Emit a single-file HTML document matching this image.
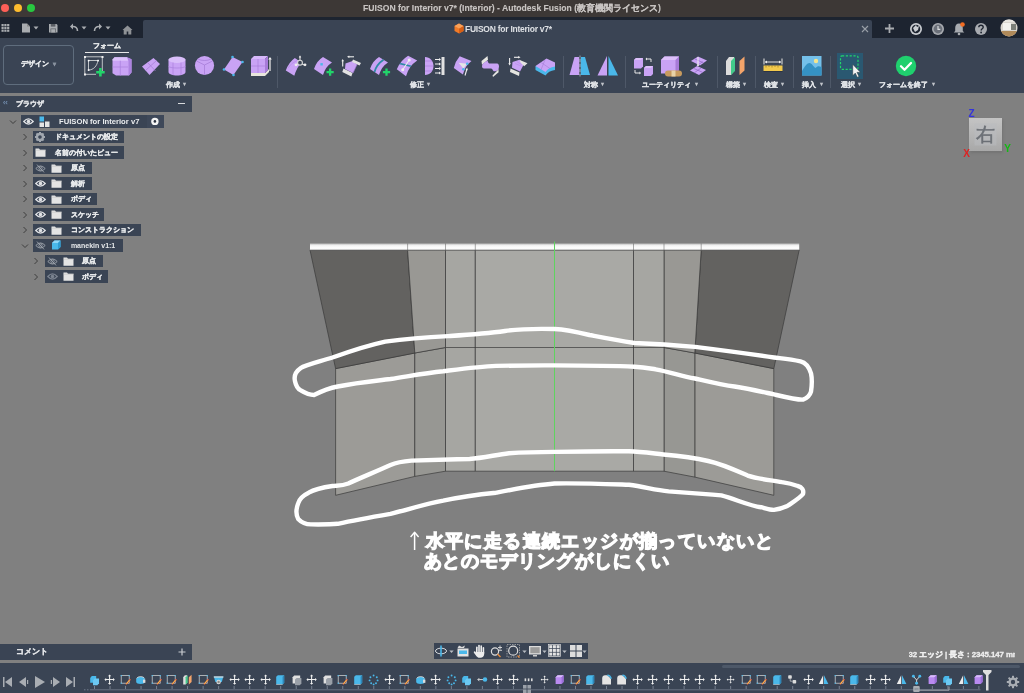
<!DOCTYPE html>
<html lang="ja"><head><meta charset="utf-8"><title>Fusion</title>
<style>
*{margin:0;padding:0;box-sizing:border-box}
html,body{width:1024px;height:693px;overflow:hidden;background:#808080;font-family:"Liberation Sans",sans-serif;position:relative}
.a{position:absolute}
div.a{-webkit-text-stroke-width:0.3px}
svg{overflow:visible}
</style></head><body>
<div id="root" style="position:absolute;left:0;top:0;width:1024px;height:693px;will-change:transform">
<div class="a" style="left:0;top:0;width:1024px;height:17px;background:#3d3836"></div>
<div class="a" style="left:0.7000000000000002px;top:4.2px;width:8px;height:8px;border-radius:50%;background:#fe5f57"></div>
<div class="a" style="left:13.600000000000001px;top:4.2px;width:8px;height:8px;border-radius:50%;background:#febc2e"></div>
<div class="a" style="left:26.5px;top:4.2px;width:8px;height:8px;border-radius:50%;background:#28c840"></div>
<div class="a" style="left:0;top:2px;width:1024px;text-align:center;font-size:8.62px;font-weight:bold;color:#c9c5c3;line-height:12px;-webkit-text-stroke-width:0.1px">FUISON for Interior v7* (Interior) - Autodesk Fusion (教育機関ライセンス)</div>
<div class="a" style="left:0;top:17px;width:1024px;height:21px;background:#1d2430"></div>
<div class="a" style="left:143px;top:20px;width:729px;height:18px;background:#3a4454;border-radius:2px 2px 0 0"></div>
<svg class="a" style="left:0px;top:23px" width="10" height="10" viewBox="0 0 10 10"><rect x="1.5" y="1.0" width="2.2" height="2.2" fill="#a9acb0"/><rect x="1.5" y="3.8" width="2.2" height="2.2" fill="#a9acb0"/><rect x="1.5" y="6.6" width="2.2" height="2.2" fill="#a9acb0"/><rect x="4.3" y="1.0" width="2.2" height="2.2" fill="#a9acb0"/><rect x="4.3" y="3.8" width="2.2" height="2.2" fill="#a9acb0"/><rect x="4.3" y="6.6" width="2.2" height="2.2" fill="#a9acb0"/><rect x="7.1" y="1.0" width="2.2" height="2.2" fill="#a9acb0"/><rect x="7.1" y="3.8" width="2.2" height="2.2" fill="#a9acb0"/><rect x="7.1" y="6.6" width="2.2" height="2.2" fill="#a9acb0"/></svg>
<svg class="a" style="left:21px;top:23px" width="10" height="10" viewBox="0 0 10 10"><path d="M1 0.5h5l3 3v6h-8z" fill="#a9acb0"/><path d="M6 0.5v3h3" fill="#888"/></svg>
<svg class="a" style="left:33px;top:26px" width="7" height="4" viewBox="0 0 7 4"><path d="M0.5 0.5h5l-2.5 3z" fill="#a9acb0"/></svg>
<svg class="a" style="left:48px;top:23px" width="10" height="10" viewBox="0 0 10 10"><path d="M1 1h7.5l1 1v7.5h-8.5z" fill="#a9acb0"/><rect x="2.8" y="1" width="4.6" height="2.6" fill="#5a5e64"/><rect x="2.5" y="5.5" width="5.5" height="4" fill="#5a5e64"/><rect x="3.2" y="6.2" width="4.1" height="3.3" fill="#a9acb0"/></svg>
<svg class="a" style="left:69px;top:23px" width="10" height="9" viewBox="0 0 10 9"><path d="M8.5 8c0-3-2-4.5-4.5-4.5h-2" stroke="#a9acb0" stroke-width="1.6" fill="none"/><path d="M1 3.5l3-3v6z" fill="#a9acb0"/></svg>
<svg class="a" style="left:81px;top:26px" width="7" height="4" viewBox="0 0 7 4"><path d="M0.5 0.5h5l-2.5 3z" fill="#a9acb0"/></svg>
<svg class="a" style="left:93px;top:23px" width="10" height="9" viewBox="0 0 10 9"><path d="M1.5 8c0-3 2-4.5 4.5-4.5h2" stroke="#a9acb0" stroke-width="1.6" fill="none"/><path d="M9 3.5l-3-3v6z" fill="#a9acb0"/></svg>
<svg class="a" style="left:105px;top:26px" width="7" height="4" viewBox="0 0 7 4"><path d="M0.5 0.5h5l-2.5 3z" fill="#a9acb0"/></svg>
<svg class="a" style="left:122px;top:25px" width="11" height="10" viewBox="0 0 11 10"><path d="M5.5 0.5l5 4.5h-1.2v4.5h-3v-3h-1.6v3h-3v-4.5h-1.2z" fill="#8f9296"/></svg>
<svg class="a" style="left:454px;top:23px" width="10" height="11" viewBox="0 0 10 11"><path d="M5 0.5l4.5 2.5v5l-4.5 2.5l-4.5-2.5v-5z" fill="#f07b28"/><path d="M5 5.5l4.5-2.5v5l-4.5 2.5z" fill="#d85f14"/><path d="M0.5 3l4.5-2.5l4.5 2.5l-4.5 2.5z" fill="#f9a25a"/></svg>
<div class="a" style="left:465px;top:23.5px;font-size:8.5px;font-weight:bold;letter-spacing:-0.25px;color:#dde0e4;line-height:10px;white-space:nowrap;-webkit-text-stroke-width:0">FUISON for Interior v7*</div>
<svg class="a" style="left:861px;top:25px" width="8" height="8" viewBox="0 0 8 8"><path d="M1 1l6 6M7 1l-6 6" stroke="#9aa0a8" stroke-width="1.1"/></svg>
<svg class="a" style="left:884px;top:23px" width="11" height="11" viewBox="0 0 11 11"><path d="M5.5 1v9M1 5.5h9" stroke="#a9acb0" stroke-width="1.8"/></svg>
<svg class="a" style="left:909px;top:22px" width="14" height="14" viewBox="0 0 14 14"><circle cx="7" cy="7" r="6" fill="#c9ccd0"/><circle cx="7" cy="7" r="4.3" fill="#1d2430"/><path d="M4 6l3-3l1 2l2-1l-1 4l-3 2z" fill="#c9ccd0"/></svg>
<svg class="a" style="left:931px;top:22px" width="14" height="14" viewBox="0 0 14 14"><circle cx="7" cy="7" r="6" fill="#a8abb0"/><circle cx="7" cy="7" r="4.4" fill="#6b7079"/><path d="M7 4v3.3h2.3" stroke="#d8dadd" stroke-width="1.2" fill="none"/></svg>
<svg class="a" style="left:952px;top:21px" width="14" height="15" viewBox="0 0 14 15"><path d="M7 2.5c-2.5 0-3.8 2-3.8 4.5v3l-1.5 1.5h10.6l-1.5-1.5v-3c0-2.5-1.3-4.5-3.8-4.5z" fill="#a8abb0"/><circle cx="7" cy="13" r="1.3" fill="#a8abb0"/><circle cx="10.5" cy="3.5" r="2.3" fill="#f26b21"/></svg>
<svg class="a" style="left:974px;top:22px" width="14" height="14" viewBox="0 0 14 14"><circle cx="7" cy="7" r="6" fill="#a8abb0"/><path d="M4.8 5.3c0-1.3 1-2.1 2.2-2.1s2.2 0.8 2.2 2c0 1.5-2 1.6-2 3.2" stroke="#1d2430" stroke-width="1.4" fill="none"/><circle cx="7.1" cy="10.5" r="0.9" fill="#1d2430"/></svg>
<svg class="a" style="left:1000px;top:19px" width="18" height="18" viewBox="0 0 18 18"><defs><clipPath id="av"><circle cx="9" cy="9" r="8.5"/></clipPath></defs><g clip-path="url(#av)"><rect width="18" height="18" fill="#d9d6cf"/><rect x="0" y="12" width="18" height="6" fill="#b08a5a"/><rect x="3" y="4" width="8" height="7" fill="#f2f2ee"/><rect x="11" y="5" width="5" height="6" fill="#7b7f78"/><rect x="0" y="0" width="18" height="3" fill="#e8e6e0"/></g></svg>
<div class="a" style="left:0;top:38px;width:1024px;height:55px;background:#3a4454"></div>
<div class="a" style="left:3px;top:45px;width:71px;height:40px;border:1.2px solid #5f6d7d;border-radius:4px"></div>
<div class="a" style="left:3px;top:59px;width:71px;text-align:center;font-size:7px;font-weight:bold;color:#e6e8ea;line-height:10px">デザイン<span style="font-size:6px;color:#8a93a0;margin-left:4px">&#9662;</span></div>
<div class="a" style="left:77px;top:40.5px;width:60px;text-align:center;font-size:7px;font-weight:bold;color:#e6e8ea;line-height:9px">フォーム</div>
<div class="a" style="left:85px;top:51.5px;width:44px;height:1.6px;background:#e8e8e8"></div>
<svg class="a" style="left:83px;top:55px" width="22" height="22" viewBox="0 0 22 22">
<rect x="1.8" y="1.8" width="17.5" height="17.5" fill="none" stroke="#bfc2c6" stroke-width="1"/>
<rect x="1" y="1" width="2" height="2" fill="#eee"/><rect x="18.5" y="1" width="2" height="2" fill="#eee"/><rect x="1" y="18.5" width="2" height="2" fill="#eee"/>
<path d="M5.5 5.5v9.5M5.5 15c5 0 8.5-4 9.5-9.5M5.5 5.5h9.5" stroke="#cfd2d6" stroke-width="0.9" fill="none"/>
<rect x="4.8" y="4.8" width="1.6" height="1.6" fill="#fff"/><rect x="14.3" y="4.8" width="1.6" height="1.6" fill="#fff"/><rect x="4.8" y="14.3" width="1.6" height="1.6" fill="#fff"/>
<rect x="13" y="16" width="7" height="6" fill="#3a4454"/>
<path d="M17.4 13v8.5M13.2 17.2h8.5" stroke="#22d46a" stroke-width="2.6"/>
</svg>
<svg class="a" style="left:111px;top:55px" width="22" height="22" viewBox="0 0 22 22">
<path d="M3.5 2.2h12.5l4.5 2v13.3l-2.5 3h-13l-3.5-2.2v-12.5z" fill="#c9a3f5"/>
<path d="M16 2.2l4.5 2v13.3l-3 3.2v-15z" fill="#ad83e0"/>
<path d="M1.5 4.3l2-2.1h12.5l1 3.5h-15.5z" fill="#dcc2fb"/>
<path d="M1.5 12h15.5M9.3 5.7v15" stroke="#a97fdc" stroke-width="0.7"/>
</svg>
<svg class="a" style="left:140px;top:55px" width="22" height="22" viewBox="0 0 22 22">
<path d="M2 11.5l11.5-8.5l6.5 6l-10.5 11z" fill="#c9a3f5"/>
<path d="M7.5 7.5l8 8.5M5.5 15.5l11-10" stroke="#a47ad6" stroke-width="0.7"/>
</svg>
<svg class="a" style="left:167px;top:55px" width="22" height="22" viewBox="0 0 22 22">
<path d="M1.5 4.5v12.5c0 2.2 4 3.5 8.5 3.5s8.5-1.3 8.5-3.5v-12.5z" fill="#c9a3f5"/>
<ellipse cx="10" cy="4.8" rx="8.5" ry="3.2" fill="#d9befa"/>
<path d="M1.5 11.5c2.5 2 14.5 2 17 0M6 7.5v12.5M14 7.5v12.5" stroke="#a97fdc" stroke-width="0.7" fill="none"/>
</svg>
<svg class="a" style="left:194px;top:55px" width="22" height="22" viewBox="0 0 22 22">
<circle cx="10.5" cy="10.5" r="9.6" fill="#c9a3f5"/>
<path d="M10.5 10v10M10.5 10l-8-4M10.5 10l8-4M4 4c3 2 10 2 13 0" stroke="#a47ad6" stroke-width="0.7" fill="none"/>
</svg>
<svg class="a" style="left:222px;top:55px" width="22" height="22" viewBox="0 0 22 22">
<path d="M10.5 2l10 5l-9 13l-9.5-5.5z" fill="#c9a3f5"/>
<circle cx="10.5" cy="2" r="1.3" fill="#4ab8ea"/><circle cx="20.5" cy="7" r="1.3" fill="#4ab8ea"/><circle cx="11.5" cy="20" r="1.3" fill="#4ab8ea"/><circle cx="2" cy="14.5" r="1.3" fill="#4ab8ea"/>
</svg>
<svg class="a" style="left:249px;top:55px" width="22" height="22" viewBox="0 0 22 22">
<path d="M2 18l14 0l4-4v3l-4 4h-14z" fill="#e8e6dc"/>
<path d="M2 4h14v14h-14z" fill="#c9a3f5"/>
<path d="M2 4l3-3h14l-3 3z" fill="#d6b8fa"/>
<path d="M16 4l3-3v14l-3 3z" fill="#a77bd8"/>
<path d="M2 11h14M9 4v14" stroke="#a47ad6" stroke-width="0.6"/>
<path d="M21 3v13" stroke="#d8d8d8" stroke-width="1.4"/><path d="M19.2 4.5l1.8-2.5l1.8 2.5z" fill="#eee"/>
</svg>
<div class="a" style="left:277px;top:56px;width:1px;height:32px;background:#4e5868"></div>
<svg class="a" style="left:284px;top:55px" width="22" height="22" viewBox="0 0 22 22"><path d="M1.8 15.6Q4.5 7.5 10.8 3L17.5 7.5Q13 12 10.3 20.8Z" fill="#c9a3f5"/>
<path d="M4 13Q7 8 13 5.5" stroke="#b088e0" stroke-width="0.6" fill="none"/>
<circle cx="16" cy="7.7" r="2.4" fill="#3a4454" stroke="#d8d8d8" stroke-width="1.1"/>
<path d="M16 5.3V1.5M14 8.8l-2 1.2M18 8.8l2 1.2" stroke="#ddd" stroke-width="1.1"/>
<path d="M14.8 2.5l1.2-2.2l1.2 2.2z" fill="#eee"/><circle cx="12" cy="9.8" r="1.4" fill="#eee"/><circle cx="21" cy="9.8" r="1.4" fill="#eee"/>
</svg>
<svg class="a" style="left:312px;top:55px" width="22" height="22" viewBox="0 0 22 22"><path d="M2 14Q4.5 6 11 2L20 7.5Q13.5 11.5 11 20Z" fill="#c9a3f5"/>
<rect x="8.4" y="8.1" width="2.4" height="2.4" fill="#4ab8ea"/>
<path d="M18.1 13.5v7.2M14.5 17.1h7.2" stroke="#22d46a" stroke-width="2.3"/>
</svg>
<svg class="a" style="left:340px;top:55px" width="22" height="22" viewBox="0 0 22 22">
<path d="M3.5 13.5l9 4.5l-1.2 3.5l-9-4.5z" fill="#e2e2e2"/>
<path d="M5.5 8.5l7-2.5l4.5 3.5l-4 8.5l-8-4z" fill="#c9a3f5"/>
<path d="M12.5 6l4.5 3.5l-4 8.5" stroke="#a47ad6" stroke-width="0.6" fill="none"/>
<path d="M13 4.5l8 3.5l-1.5 2.5l-7.5-3.5z" fill="#e2e2e2"/>
<path d="M2.7 11.5V5.5" stroke="#eee" stroke-width="1.1"/><path d="M1.4 6.3l1.3-2.3l1.3 2.3z" fill="#eee"/>
<path d="M14 1.8H8.5" stroke="#eee" stroke-width="1.1"/><path d="M9.3 0.5l-2.3 1.3l2.3 1.3z" fill="#eee"/>
</svg>
<svg class="a" style="left:368px;top:55px" width="22" height="22" viewBox="0 0 22 22"><path d="M2 14Q4.5 6 11 2L20 7.5Q13.5 11.5 11 20Z" fill="#c9a3f5"/>
<path d="M6.5 17Q8.5 9.5 15.5 4.8" stroke="#2f8aa6" stroke-width="1.8" fill="none"/>
<path d="M18.5 13.5v7.2M14.9 17.1h7.2" stroke="#22d46a" stroke-width="2.3"/>
</svg>
<svg class="a" style="left:396px;top:55px" width="22" height="22" viewBox="0 0 22 22">
<defs><clipPath id="c12"><path d="M0.8 14.2Q4.5 5.5 12.1 0.8L21.2 5.6Q13 11 10 21.2Z"/></clipPath></defs>
<path d="M0.8 14.2Q4.5 5.5 12.1 0.8L21.2 5.6Q13 11 10 21.2Z" fill="#c9a3f5"/>
<path d="M0 7.5L20 12.5" stroke="#2f8aa6" stroke-width="1.8" clip-path="url(#c12)"/>
<path d="M13.2 5L6.7 14.7" stroke="#eee" stroke-width="1.1"/>
<circle cx="13.2" cy="5" r="1.5" fill="#eee"/><circle cx="6.7" cy="14.7" r="1.5" fill="#eee"/>
</svg>
<svg class="a" style="left:423px;top:55px" width="22" height="22" viewBox="0 0 22 22">
<path d="M2 2c5 0 8.5 4 8.5 9s-3.5 9-8.5 9z" fill="#c9a3f5"/>
<path d="M2 6h7M2 11h8M2 16h7" stroke="#a47ad6" stroke-width="0.6"/>
<path d="M12 4.5h5M12 9h5M12 13.5h5M12 18h5" stroke="#eee" stroke-width="1"/>
<path d="M16 3l2 1.5l-2 1.5zM16 7.5l2 1.5l-2 1.5zM16 12l2 1.5l-2 1.5zM16 16.5l2 1.5l-2 1.5z" fill="#eee"/>
<rect x="18.5" y="2" width="3" height="18" fill="#e2e2e2"/>
</svg>
<svg class="a" style="left:452px;top:55px" width="22" height="22" viewBox="0 0 22 22">
<path d="M1.8 13.1Q3.5 6 7.7 1.3L19.5 6.1Q13 11 10.9 19.6Z" fill="#c9a3f5"/>
<path d="M6.6 7.7L15.2 8.8L11.4 13.6z" fill="#e4e4e4"/>
<circle cx="15.2" cy="8.8" r="1.3" fill="#4ab8ea"/><circle cx="11.4" cy="14.2" r="1.3" fill="#4ab8ea"/>
<path d="M13 20.5l1.8-6" stroke="#eee" stroke-width="1.1"/><path d="M13.6 14.8l1.6-2.2l0.6 2.6z" fill="#eee"/>
</svg>
<svg class="a" style="left:480px;top:55px" width="22" height="22" viewBox="0 0 22 22">
<path d="M1.5 6L7.5 1L8 4.8L2 9.8Z" fill="#e6e6e2"/>
<path d="M2 11C2 9 4 7.5 7.5 5.5L8 7C8.5 8 9 8.5 10 8.5L17 8.5C18.5 8.5 19 10 19 11.5L18.5 14.5C16 16.5 14 17 13 15.5C12.5 14 11.5 13.5 10.5 13.5L4 13.5C2.5 13.5 2 12.5 2 11Z" fill="#c9a3f5"/>
<path d="M12.5 20.5L18.5 14.3L18.6 17.3L13 22Z" fill="#e6e6e2"/>
</svg>
<svg class="a" style="left:507px;top:55px" width="22" height="22" viewBox="0 0 22 22">
<path d="M3.5 13.5L12.5 17.5L12 21L3 17Z" fill="#e4e4e0"/>
<path d="M5.5 7L12.5 4.8L17 9L13 16.5L5 12.8Z" fill="#c9a3f5"/>
<path d="M8 8.5l6 2.5M9.5 6.5l5 3" stroke="#b088e0" stroke-width="0.5"/>
<path d="M12.8 5L20.5 8.3L17.2 11.2L13.5 7.5Z" fill="#e4e4e0"/>
<path d="M2.6 3V9" stroke="#eee" stroke-width="1.1"/><path d="M1.3 8.2l1.3 2.3l1.3-2.3z" fill="#eee"/>
<path d="M7 2.3H12" stroke="#eee" stroke-width="1.1"/><path d="M11.2 1l2.3 1.3l-2.3 1.3z" fill="#eee"/>
</svg>
<svg class="a" style="left:534px;top:55px" width="22" height="22" viewBox="0 0 22 22">
<path d="M1.5 11v4l10 5.5c2-3 5-5 9.5-5.5v-4z" fill="#4ab8ea"/>
<path d="M1.5 11l11-7.5l8.5 4v4c-4.5 0.5-7.5 2.5-9.5 5.5z" fill="#c9a3f5"/>
<path d="M7 7.5l9 6M11 4.8l-4 10" stroke="#a47ad6" stroke-width="0.6"/>
</svg>
<div class="a" style="left:563px;top:56px;width:1px;height:32px;background:#4e5868"></div>
<svg class="a" style="left:569px;top:55px" width="22" height="22" viewBox="0 0 22 22">
<path d="M5.5 2h5v18h-10z" fill="#c9a3f5"/>
<path d="M11.5 2h4.5l5 18h-9.5z" fill="#4ab8ea"/>
<path d="M11 0.5v21" stroke="#9aa0a8" stroke-width="1"/>
<path d="M11 2v2M11 7v2M11 12v2M11 17v2" stroke="#2c3340" stroke-width="0.8"/>
</svg>
<svg class="a" style="left:597px;top:55px" width="22" height="22" viewBox="0 0 22 22">
<path d="M10 1v19.5h-9.5z" fill="#c9a3f5"/>
<path d="M11.5 1l9.5 19.5h-9.5z" fill="#4ab8ea"/>
</svg>
<div class="a" style="left:625px;top:56px;width:1px;height:32px;background:#4e5868"></div>
<svg class="a" style="left:633px;top:55px" width="22" height="22" viewBox="0 0 22 22">
<path d="M1 5l2-2h7v8.5l-2 2h-7z" fill="#c9a3f5"/><path d="M1 5l2-2h7l-2 2z" fill="#dcc0fa"/>
<path d="M11 13l2-2h7v8l-2 2h-7z" fill="#c9a3f5"/><path d="M11 13l2-2h7l-2 2z" fill="#dcc0fa"/>
<path d="M13 4h5v3" stroke="#e8e8e8" stroke-width="1" fill="none"/><path d="M14 2.5l-1.5 1.5l1.5 1.5z" fill="#eee"/>
<path d="M2 15v3h5" stroke="#e8e8e8" stroke-width="1" fill="none"/><path d="M6.5 16.5l1.5 1.5l-1.5 1.5z" fill="#eee"/>
</svg>
<svg class="a" style="left:660px;top:55px" width="22" height="22" viewBox="0 0 22 22">
<path d="M1 5l3.5-3.5h14.5v13.5l-3.5 3.5h-14.5z" fill="#c9a3f5"/>
<path d="M1 5l3.5-3.5h14.5l-3.5 3.5z" fill="#dcc0fa"/>
<path d="M15.5 5l3.5-3.5v13.5l-3.5 3.5z" fill="#a77bd8"/>
<rect x="5" y="15.5" width="17" height="6" rx="3" fill="#c79a5e"/>
<rect x="11.5" y="15.5" width="4" height="6" fill="#e9d2a8"/>
</svg>
<svg class="a" style="left:688px;top:55px" width="22" height="22" viewBox="0 0 22 22">
<path d="M3 6l7-4.5l9 4l-7 5z" fill="#c9a3f5"/>
<path d="M2 15.5l7-4.5l9 4l-7 5z" fill="#c9a3f5"/>
<path d="M6.5 3.8l9 4M8 11.5l6.5-4.8M5.5 13.3l9 4M6 18l7-5" stroke="#8f67c4" stroke-width="0.7"/>
<path d="M10 2v9" stroke="#eee" stroke-width="1"/><path d="M8.7 9.5l1.3 2l1.3-2z" fill="#eee"/>
</svg>
<div class="a" style="left:716.5px;top:56px;width:1px;height:32px;background:#4e5868"></div>
<svg class="a" style="left:724px;top:55px" width="22" height="22" viewBox="0 0 22 22">
<path d="M2 6l3-4h5v14l-3 4h-5z" fill="#dcdcdc"/>
<path d="M7 6l4-4v14l-4 4z" fill="#43c98a"/>
<path d="M15.5 6l5-4.5v14l-5 4.5z" fill="#f4a46a"/>
</svg>
<div class="a" style="left:754.5px;top:56px;width:1px;height:32px;background:#4e5868"></div>
<svg class="a" style="left:762px;top:55px" width="22" height="22" viewBox="0 0 22 22">
<rect x="1.5" y="10.5" width="19" height="5.5" fill="#f2c94c"/>
<path d="M4 10.5v2M7 10.5v1.5M10 10.5v2M13 10.5v1.5M16 10.5v2" stroke="#8a6d1c" stroke-width="0.6"/>
<path d="M2 3.5v6M20 3.5v6" stroke="#ccc" stroke-width="1.2"/>
<path d="M3 7h16" stroke="#ddd" stroke-width="1"/><path d="M5 5.5l-2 1.5l2 1.5zM17 5.5l2 1.5l-2 1.5z" fill="#eee"/>
<rect x="1.5" y="16" width="19" height="0.8" fill="#2a3040"/>
</svg>
<div class="a" style="left:792.5px;top:56px;width:1px;height:32px;background:#4e5868"></div>
<svg class="a" style="left:801px;top:55px" width="22" height="22" viewBox="0 0 22 22">
<rect x="1" y="1" width="19.5" height="19.5" fill="#74c0ea"/>
<circle cx="15" cy="6" r="2.2" fill="#f6e58d"/>
<path d="M1 16c3-5 5-8 7.5-8s4 4 6 5c2-2 3-2.5 6-1v8.5h-19.5z" fill="#3592c4"/>
</svg>
<div class="a" style="left:830px;top:56px;width:1px;height:32px;background:#4e5868"></div>
<div class="a" style="left:837px;top:53px;width:26px;height:25.5px;background:#2a5871"></div>
<svg class="a" style="left:837px;top:53px" width="26" height="26" viewBox="0 0 26 26">
<rect x="3.5" y="2.8" width="17.5" height="13.5" rx="1.5" fill="none" stroke="#22d46a" stroke-width="1.2" stroke-dasharray="2.2 1.6"/>
<path d="M15.8 11.5v11l2.5-2.5l2 4.2l1.6-0.8l-2-4.1h3.4z" fill="#f4f4f4" stroke="#333" stroke-width="0.4"/>
</svg>
<svg class="a" style="left:895px;top:55px" width="22" height="22" viewBox="0 0 22 22">
<circle cx="11" cy="11" r="10.2" fill="#1fd06e"/>
<path d="M6 11.3l3.5 3.4l6.5-6.7" stroke="#fff" stroke-width="2.3" fill="none" stroke-linecap="round" stroke-linejoin="round"/>
</svg>
<div class="a lbl" style="left:115.89999999999999px;top:79.5px;width:120px;text-align:center;font-size:7px;color:#dfe2e6;font-weight:bold;line-height:10px">作成<span style="font-size:6px;color:#c0c4ca;-webkit-text-stroke:0;margin-left:3.5px;position:relative;top:-1px">&#9662;</span></div>
<div class="a lbl" style="left:360.2px;top:79.5px;width:120px;text-align:center;font-size:7px;color:#dfe2e6;font-weight:bold;line-height:10px">修正<span style="font-size:6px;color:#c0c4ca;-webkit-text-stroke:0;margin-left:3.5px;position:relative;top:-1px">&#9662;</span></div>
<div class="a lbl" style="left:534.2px;top:79.5px;width:120px;text-align:center;font-size:7px;color:#dfe2e6;font-weight:bold;line-height:10px">対称<span style="font-size:6px;color:#c0c4ca;-webkit-text-stroke:0;margin-left:3.5px;position:relative;top:-1px">&#9662;</span></div>
<div class="a lbl" style="left:610.0px;top:79.5px;width:120px;text-align:center;font-size:7px;color:#dfe2e6;font-weight:bold;line-height:10px">ユーティリティ<span style="font-size:6px;color:#c0c4ca;-webkit-text-stroke:0;margin-left:3.5px;position:relative;top:-1px">&#9662;</span></div>
<div class="a lbl" style="left:676.2px;top:79.5px;width:120px;text-align:center;font-size:7px;color:#dfe2e6;font-weight:bold;line-height:10px">構築<span style="font-size:6px;color:#c0c4ca;-webkit-text-stroke:0;margin-left:3.5px;position:relative;top:-1px">&#9662;</span></div>
<div class="a lbl" style="left:714.2px;top:79.5px;width:120px;text-align:center;font-size:7px;color:#dfe2e6;font-weight:bold;line-height:10px">検査<span style="font-size:6px;color:#c0c4ca;-webkit-text-stroke:0;margin-left:3.5px;position:relative;top:-1px">&#9662;</span></div>
<div class="a lbl" style="left:752.7px;top:79.5px;width:120px;text-align:center;font-size:7px;color:#dfe2e6;font-weight:bold;line-height:10px">挿入<span style="font-size:6px;color:#c0c4ca;-webkit-text-stroke:0;margin-left:3.5px;position:relative;top:-1px">&#9662;</span></div>
<div class="a lbl" style="left:790.8000000000001px;top:79.5px;width:120px;text-align:center;font-size:7px;color:#dfe2e6;font-weight:bold;line-height:10px">選択<span style="font-size:6px;color:#c0c4ca;-webkit-text-stroke:0;margin-left:3.5px;position:relative;top:-1px">&#9662;</span></div>
<div class="a lbl" style="left:847.2px;top:79.5px;width:120px;text-align:center;font-size:7px;color:#dfe2e6;font-weight:bold;line-height:10px">フォームを終了<span style="font-size:6px;color:#c0c4ca;-webkit-text-stroke:0;margin-left:3.5px;position:relative;top:-1px">&#9662;</span></div>
<div class="a" style="left:0;top:93px;width:1024px;height:570px;background:#808080"></div>
<svg class="a" style="left:0;top:0" width="1024" height="693" viewBox="0 0 1024 693">
<defs><linearGradient id="strip" x1="0" y1="0" x2="0" y2="1">
<stop offset="0" stop-color="#bdbdbd"/><stop offset="0.3" stop-color="#f4f4f4"/><stop offset="0.7" stop-color="#ffffff"/><stop offset="0.85" stop-color="#d0d0d0"/><stop offset="1" stop-color="#6a6a6a"/></linearGradient></defs>
<g stroke="#3a3a3a" stroke-width="0.7">
<!-- lower panels -->
<path d="M335.6 368.6L414.8 353L414.8 476.4L335.6 495.3Z" fill="#9c9b97"/>
<path d="M773.8 368.6L694.8 353L694.8 477.1L773.8 495.3Z" fill="#9c9b97"/>
<path d="M414.8 353L445.5 347.5L445.5 471.2L414.8 476.4Z" fill="#979793"/>
<path d="M694.8 353L664 347.5L664 471.2L694.8 477.1Z" fill="#979793"/>
<!-- upper dark panels -->
<path d="M310 250L407.6 250L414.8 353L335.6 368.6Z" fill="#636260"/>
<path d="M799.2 250L701.2 250L694.8 353L773.8 368.6Z" fill="#636260"/>
<!-- upper medium panels -->
<path d="M407.6 250L445.5 250L445.5 347.5L414.8 353Z" fill="#999894"/>
<path d="M701.2 250L664 250L664 347.5L694.8 353Z" fill="#999894"/>
<!-- center -->
<path d="M445.5 250H475.3V471.2H445.5Z" fill="#a6a6a2"/>
<path d="M664 250H633.5V471.2H664Z" fill="#a6a6a2"/>
<path d="M475.3 250H633.5V471.2H475.3Z" fill="#a9a9a5"/>
<path d="M445.5 347.5H664" fill="none"/>
</g>
<rect x="310" y="243.5" width="489.2" height="7" fill="url(#strip)"/>
<path d="M407.6 243.5v7M445.5 243.5v7M475.3 243.5v7M633.5 243.5v7M664 243.5v7M701.2 243.5v7" stroke="#555" stroke-width="0.5"/>
<path d="M554.5 241.5V471.2" stroke="#5fd35f" stroke-width="1"/>
<g fill="none" stroke="#ffffff" stroke-width="4.4" stroke-linecap="round" stroke-linejoin="round">
<path d="M554.5 329C535 328.5 522 328.5 505 331C490 333 474.8 334.3 450 336C430 337 414.2 337.7 385.2 341.6C365 346 345 353 332.5 357.5C318 362 305 365 300.8 368C295 372 294 377 295 381.2C296 386 298 389 300.8 390.4C305 393 310 395 314 395C322 391 330 388 337.7 386.5C360 382 375 381 390.5 379C410 376 425 373 443.2 371.2C465 368.5 480 366.5 496 365.9C515 365.5 535 365.3 554.5 365.4C590 365.5 615 365.8 634.4 366.7C645 367.5 650 368.5 655.5 369.3C670 372 680 375.5 695 378.5C710 382 722 385 734.5 386.5C750 389 765 392.5 774 394.4C785 397 797 400 803 399.6C808 398 810 395 811 391.7C812 385 812 378 811 373.3C809 367 805 362.5 800.5 361.4C790 359 782 358.5 774 357.5C750 354 720 350 695 346.9C670 344.5 650 343.5 634.4 343C615 340 600 337 589.5 335C575 331.5 565 329.5 554.5 329Z"/>
<path d="M554.5 451.9C535 452 520 452.5 509 453.2C495 455 483 458 469.6 459C450 459.5 430 460 411.5 460.6C400 461.5 395 463 390.5 465C375 472 360 478 348.3 483.5C342 486 338 485.5 332.5 486C322 487.5 315 489 308.7 492.7C302 496 299 500 298.2 503.3C296 509 296 515 298.2 519C301 522 306 524.5 311.4 524.4C320 524.5 330 524.5 337.7 523.8C355 520 372 517 390.5 513.8C410 509 425 504 443.2 500.6C460 497 478 494.5 496 492.7C520 488 535 485 554.5 483.5C580 483 605 484 629 484.8C645 487 655 490 668.6 491.4C690 493 705 494 721.4 495.4C735 499 750 506 761 507.2C766 508.5 770 510 774 509.9C780 509 784 507.5 787.3 506C793 502 800 498 803 494C804 490 802 487 797.8 486C792 484 787 483 782 482.2C770 480 758 479 747.7 475.6C735 470 722 464 708.2 461C695 458 680 456 663.4 454.5C650 453 640 451.5 629 451.3C600 451 575 451.5 554.5 451.9Z"/>
</g>
</svg>
<div class="a" style="left:425.5px;top:532px;font-size:18px;font-weight:bold;color:#ffffff;line-height:19px;white-space:nowrap;letter-spacing:1.41px;-webkit-text-stroke:1.3px #fff;text-shadow:0 0 1px #555">水平に走る連続エッジが揃っていないと</div>
<svg class="a" style="left:408px;top:530px" width="14" height="22" viewBox="0 0 14 22"><path d="M6.6 3V20" stroke="#fff" stroke-width="1.5"/><path d="M2.6 7L6.6 2.2L10.6 7" stroke="#fff" stroke-width="1.4" fill="none" stroke-linejoin="round"/></svg>
<div class="a" style="left:423.5px;top:551.5px;font-size:18px;font-weight:bold;color:#ffffff;line-height:19px;white-space:nowrap;letter-spacing:0.95px;-webkit-text-stroke:1.3px #fff;text-shadow:0 0 1px #555">あとのモデリングがしにくい</div>
<svg class="a" style="left:955px;top:100px" width="69" height="65" viewBox="0 0 69 65">
<defs><linearGradient id="cube" x1="0" y1="0" x2="0" y2="1"><stop offset="0" stop-color="#c4c4c4"/><stop offset="1" stop-color="#a8a8a8"/></linearGradient>
<filter id="sh" x="-30%" y="-30%" width="160%" height="160%"><feGaussianBlur stdDeviation="1.5"/></filter></defs>
<rect x="15" y="20" width="33" height="33" fill="#6a6a6a" opacity="0.6" filter="url(#sh)"/>
<rect x="14" y="18" width="33" height="33" fill="url(#cube)"/>
<rect x="19.5" y="23.5" width="22" height="22" fill="#b9bcc0" opacity="0.5"/>
<text x="30.5" y="40.5" font-size="18.5" text-anchor="middle" fill="#6c7076" stroke="#6c7076" stroke-width="0.5" font-family="Liberation Sans">右</text>
<text x="16.5" y="16.5" font-size="10" font-weight="bold" text-anchor="middle" fill="#3333dd" font-family="Liberation Sans">Z</text>
<text x="11.5" y="57" font-size="10" font-weight="bold" text-anchor="middle" fill="#dd2222" font-family="Liberation Sans">X</text>
<text x="52.5" y="52" font-size="10" font-weight="bold" text-anchor="middle" fill="#11bb11" font-family="Liberation Sans">Y</text>
</svg>
<div class="a" style="left:908.5px;top:649.5px;width:106px;overflow:hidden;font-size:7.9px;font-weight:bold;color:#eeeeee;line-height:10px;white-space:nowrap;letter-spacing:-0.1px">32 エッジ | 長さ : 2345.147 mm</div>
<div class="a" style="left:0;top:96px;width:192px;height:16px;background:#3a4454"></div>
<div class="a" style="left:3px;top:98px;font-size:7px;color:#6f88a8;line-height:10px">&#8249;&#8249;</div>
<div class="a" style="left:15.5px;top:98.5px;font-size:7.4px;font-weight:bold;color:#e2e4e7;line-height:10px">ブラウザ</div>
<div class="a" style="left:178px;top:103px;width:7px;height:1.3px;background:#d8dadd"></div>
<div class="a" style="left:21.2px;top:115.3px;width:142.4px;height:12.3px;background:#3a4454"></div>
<svg class="a" style="left:8.5px;top:117.6px" width="8" height="8" viewBox="0 0 8 8"><path d="M1 2.5l3 3l3-3" stroke="#3e3e3e" stroke-width="1" fill="none"/></svg>
<svg class="a" style="left:23px;top:117.1px" width="11" height="9" viewBox="0 0 11 9"><path d="M0.8 4.5Q5.5 -0.6 10.2 4.5Q5.5 9.6 0.8 4.5Z" fill="none" stroke="#e0e2e5" stroke-width="1.3"/><circle cx="5.5" cy="4.5" r="1.8" fill="#e0e2e5"/></svg>
<svg class="a" style="left:39px;top:115.8px" width="11" height="11" viewBox="0 0 11 11"><rect x="0.5" y="0.5" width="4.5" height="5" fill="#4ab8ea"/><rect x="0.5" y="6.5" width="4.5" height="4.5" fill="#e4e4e4"/><rect x="6" y="5.5" width="4.5" height="5.5" fill="#e4e4e4"/></svg>
<div class="a" style="left:59px;top:116.6px;font-size:7.67px;font-weight:bold;color:#eceef0;line-height:10px;white-space:nowrap;-webkit-text-stroke-width:0">FUISON for Interior v7</div>
<div class="a" style="left:147px;top:115.3px;width:16.5px;height:12.3px;background:#3e4859"></div>
<svg class="a" style="left:149.5px;top:116.89999999999999px" width="10" height="10" viewBox="0 0 10 10"><circle cx="4.9" cy="4.4" r="3.7" fill="#f4f4f4"/><circle cx="4.9" cy="4.4" r="1.3" fill="#2a3240"/></svg>
<div class="a" style="left:33.2px;top:130.8px;width:91.3px;height:12.3px;background:#3a4454"></div>
<svg class="a" style="left:20.5px;top:133.10000000000002px" width="8" height="8" viewBox="0 0 8 8"><path d="M2.5 1l3 3l-3 3" stroke="#3e3e3e" stroke-width="1" fill="none"/></svg>
<svg class="a" style="left:35px;top:132.0px" width="10" height="10" viewBox="0 0 10 10"><circle cx="5" cy="5" r="3" fill="none" stroke="#a2a8b0" stroke-width="2.4"/><rect x="4" y="0" width="2" height="2.4" fill="#a2a8b0" transform="rotate(0 5 5)"/><rect x="4" y="0" width="2" height="2.4" fill="#a2a8b0" transform="rotate(45 5 5)"/><rect x="4" y="0" width="2" height="2.4" fill="#a2a8b0" transform="rotate(90 5 5)"/><rect x="4" y="0" width="2" height="2.4" fill="#a2a8b0" transform="rotate(135 5 5)"/><rect x="4" y="0" width="2" height="2.4" fill="#a2a8b0" transform="rotate(180 5 5)"/><rect x="4" y="0" width="2" height="2.4" fill="#a2a8b0" transform="rotate(225 5 5)"/><rect x="4" y="0" width="2" height="2.4" fill="#a2a8b0" transform="rotate(270 5 5)"/><rect x="4" y="0" width="2" height="2.4" fill="#a2a8b0" transform="rotate(315 5 5)"/></svg>
<div class="a" style="left:54.8px;top:132.10000000000002px;font-size:7px;font-weight:bold;color:#e6e8ea;line-height:10px;white-space:nowrap">ドキュメントの設定</div>
<div class="a" style="left:33.2px;top:146.3px;width:91.3px;height:12.3px;background:#3a4454"></div>
<svg class="a" style="left:20.5px;top:148.60000000000002px" width="8" height="8" viewBox="0 0 8 8"><path d="M2.5 1l3 3l-3 3" stroke="#3e3e3e" stroke-width="1" fill="none"/></svg>
<svg class="a" style="left:34.5px;top:148.3px" width="11" height="9" viewBox="0 0 11 9"><path d="M0.5 0.5h3.5l1 1.2h5.5v7h-10z" fill="#e4e4e4"/><path d="M0.5 2.2h10.5" stroke="#b8b8b8" stroke-width="0.5"/></svg>
<div class="a" style="left:54.8px;top:147.60000000000002px;font-size:7px;font-weight:bold;color:#e6e8ea;line-height:10px;white-space:nowrap">名前の付いたビュー</div>
<div class="a" style="left:33.2px;top:161.8px;width:58.7px;height:12.3px;background:#3a4454"></div>
<svg class="a" style="left:20.5px;top:164.10000000000002px" width="8" height="8" viewBox="0 0 8 8"><path d="M2.5 1l3 3l-3 3" stroke="#3e3e3e" stroke-width="1" fill="none"/></svg>
<svg class="a" style="left:35px;top:163.60000000000002px" width="11" height="9" viewBox="0 0 11 9"><path d="M0.8 4.5Q5.5 -0.6 10.2 4.5Q5.5 9.6 0.8 4.5Z" fill="none" stroke="#a0a6ae" stroke-width="0.9"/><circle cx="5.5" cy="4.5" r="1.7" fill="none" stroke="#a0a6ae" stroke-width="0.9"/><path d="M2 0.6L9 8.4" stroke="#a0a6ae" stroke-width="0.9"/></svg>
<svg class="a" style="left:51px;top:163.8px" width="11" height="9" viewBox="0 0 11 9"><path d="M0.5 0.5h3.5l1 1.2h5.5v7h-10z" fill="#e4e4e4"/><path d="M0.5 2.2h10.5" stroke="#b8b8b8" stroke-width="0.5"/></svg>
<div class="a" style="left:70.9px;top:163.10000000000002px;font-size:7px;font-weight:bold;color:#e6e8ea;line-height:10px;white-space:nowrap">原点</div>
<div class="a" style="left:33.2px;top:177.3px;width:58.7px;height:12.3px;background:#3a4454"></div>
<svg class="a" style="left:20.5px;top:179.60000000000002px" width="8" height="8" viewBox="0 0 8 8"><path d="M2.5 1l3 3l-3 3" stroke="#3e3e3e" stroke-width="1" fill="none"/></svg>
<svg class="a" style="left:35px;top:179.10000000000002px" width="11" height="9" viewBox="0 0 11 9"><path d="M0.8 4.5Q5.5 -0.6 10.2 4.5Q5.5 9.6 0.8 4.5Z" fill="none" stroke="#e0e2e5" stroke-width="1.3"/><circle cx="5.5" cy="4.5" r="1.8" fill="#e0e2e5"/></svg>
<svg class="a" style="left:51px;top:179.3px" width="11" height="9" viewBox="0 0 11 9"><path d="M0.5 0.5h3.5l1 1.2h5.5v7h-10z" fill="#e4e4e4"/><path d="M0.5 2.2h10.5" stroke="#b8b8b8" stroke-width="0.5"/></svg>
<div class="a" style="left:70.9px;top:178.60000000000002px;font-size:7px;font-weight:bold;color:#e6e8ea;line-height:10px;white-space:nowrap">解析</div>
<div class="a" style="left:33.2px;top:192.8px;width:63.8px;height:12.3px;background:#3a4454"></div>
<svg class="a" style="left:20.5px;top:195.10000000000002px" width="8" height="8" viewBox="0 0 8 8"><path d="M2.5 1l3 3l-3 3" stroke="#3e3e3e" stroke-width="1" fill="none"/></svg>
<svg class="a" style="left:35px;top:194.60000000000002px" width="11" height="9" viewBox="0 0 11 9"><path d="M0.8 4.5Q5.5 -0.6 10.2 4.5Q5.5 9.6 0.8 4.5Z" fill="none" stroke="#e0e2e5" stroke-width="1.3"/><circle cx="5.5" cy="4.5" r="1.8" fill="#e0e2e5"/></svg>
<svg class="a" style="left:51px;top:194.8px" width="11" height="9" viewBox="0 0 11 9"><path d="M0.5 0.5h3.5l1 1.2h5.5v7h-10z" fill="#e4e4e4"/><path d="M0.5 2.2h10.5" stroke="#b8b8b8" stroke-width="0.5"/></svg>
<div class="a" style="left:70.9px;top:194.10000000000002px;font-size:7px;font-weight:bold;color:#e6e8ea;line-height:10px;white-space:nowrap">ボディ</div>
<div class="a" style="left:33.2px;top:208.3px;width:71.2px;height:12.3px;background:#3a4454"></div>
<svg class="a" style="left:20.5px;top:210.60000000000002px" width="8" height="8" viewBox="0 0 8 8"><path d="M2.5 1l3 3l-3 3" stroke="#3e3e3e" stroke-width="1" fill="none"/></svg>
<svg class="a" style="left:35px;top:210.10000000000002px" width="11" height="9" viewBox="0 0 11 9"><path d="M0.8 4.5Q5.5 -0.6 10.2 4.5Q5.5 9.6 0.8 4.5Z" fill="none" stroke="#e0e2e5" stroke-width="1.3"/><circle cx="5.5" cy="4.5" r="1.8" fill="#e0e2e5"/></svg>
<svg class="a" style="left:51px;top:210.3px" width="11" height="9" viewBox="0 0 11 9"><path d="M0.5 0.5h3.5l1 1.2h5.5v7h-10z" fill="#e4e4e4"/><path d="M0.5 2.2h10.5" stroke="#b8b8b8" stroke-width="0.5"/></svg>
<div class="a" style="left:70.9px;top:209.60000000000002px;font-size:7px;font-weight:bold;color:#e6e8ea;line-height:10px;white-space:nowrap">スケッチ</div>
<div class="a" style="left:33.2px;top:223.8px;width:107.39999999999999px;height:12.3px;background:#3a4454"></div>
<svg class="a" style="left:20.5px;top:226.10000000000002px" width="8" height="8" viewBox="0 0 8 8"><path d="M2.5 1l3 3l-3 3" stroke="#3e3e3e" stroke-width="1" fill="none"/></svg>
<svg class="a" style="left:35px;top:225.60000000000002px" width="11" height="9" viewBox="0 0 11 9"><path d="M0.8 4.5Q5.5 -0.6 10.2 4.5Q5.5 9.6 0.8 4.5Z" fill="none" stroke="#e0e2e5" stroke-width="1.3"/><circle cx="5.5" cy="4.5" r="1.8" fill="#e0e2e5"/></svg>
<svg class="a" style="left:51px;top:225.8px" width="11" height="9" viewBox="0 0 11 9"><path d="M0.5 0.5h3.5l1 1.2h5.5v7h-10z" fill="#e4e4e4"/><path d="M0.5 2.2h10.5" stroke="#b8b8b8" stroke-width="0.5"/></svg>
<div class="a" style="left:70.9px;top:225.10000000000002px;font-size:7px;font-weight:bold;color:#e6e8ea;line-height:10px;white-space:nowrap">コンストラクション</div>
<div class="a" style="left:33.2px;top:239.3px;width:89.6px;height:12.3px;background:#3a4454"></div>
<svg class="a" style="left:20.5px;top:241.60000000000002px" width="8" height="8" viewBox="0 0 8 8"><path d="M1 2.5l3 3l3-3" stroke="#3e3e3e" stroke-width="1" fill="none"/></svg>
<svg class="a" style="left:35px;top:241.10000000000002px" width="11" height="9" viewBox="0 0 11 9"><path d="M0.8 4.5Q5.5 -0.6 10.2 4.5Q5.5 9.6 0.8 4.5Z" fill="none" stroke="#a0a6ae" stroke-width="0.9"/><circle cx="5.5" cy="4.5" r="1.7" fill="none" stroke="#a0a6ae" stroke-width="0.9"/><path d="M2 0.6L9 8.4" stroke="#a0a6ae" stroke-width="0.9"/></svg>
<svg class="a" style="left:51px;top:240.3px" width="10" height="10" viewBox="0 0 10 10"><path d="M1 3l2.5-2.5h6v6.5l-2.5 2.5h-6z" fill="#4ab8ea"/><path d="M1 3l2.5-2.5h6l-2.5 2.5z" fill="#8fd6f7"/><path d="M7 3l2.5-2.5v6.5l-2.5 2.5z" fill="#2e9ad0"/></svg>
<div class="a" style="left:70.9px;top:240.60000000000002px;font-size:7px;font-weight:bold;color:#e6e8ea;line-height:10px;white-space:nowrap;-webkit-text-stroke-width:0">manekin v1:1</div>
<div class="a" style="left:45.0px;top:254.8px;width:58.0px;height:12.3px;background:#3a4454"></div>
<svg class="a" style="left:32px;top:257.1px" width="8" height="8" viewBox="0 0 8 8"><path d="M2.5 1l3 3l-3 3" stroke="#3e3e3e" stroke-width="1" fill="none"/></svg>
<svg class="a" style="left:46.5px;top:256.6px" width="11" height="9" viewBox="0 0 11 9"><path d="M0.8 4.5Q5.5 -0.6 10.2 4.5Q5.5 9.6 0.8 4.5Z" fill="none" stroke="#a0a6ae" stroke-width="0.9"/><circle cx="5.5" cy="4.5" r="1.7" fill="none" stroke="#a0a6ae" stroke-width="0.9"/><path d="M2 0.6L9 8.4" stroke="#a0a6ae" stroke-width="0.9"/></svg>
<svg class="a" style="left:62.5px;top:256.8px" width="11" height="9" viewBox="0 0 11 9"><path d="M0.5 0.5h3.5l1 1.2h5.5v7h-10z" fill="#e4e4e4"/><path d="M0.5 2.2h10.5" stroke="#b8b8b8" stroke-width="0.5"/></svg>
<div class="a" style="left:82.3px;top:256.1px;font-size:7px;font-weight:bold;color:#e6e8ea;line-height:10px;white-space:nowrap">原点</div>
<div class="a" style="left:45.0px;top:270.3px;width:63.400000000000006px;height:12.3px;background:#3a4454"></div>
<svg class="a" style="left:32px;top:272.6px" width="8" height="8" viewBox="0 0 8 8"><path d="M2.5 1l3 3l-3 3" stroke="#3e3e3e" stroke-width="1" fill="none"/></svg>
<svg class="a" style="left:46.5px;top:272.1px" width="11" height="9" viewBox="0 0 11 9"><path d="M0.8 4.5Q5.5 -0.6 10.2 4.5Q5.5 9.6 0.8 4.5Z" fill="none" stroke="#7a828f" stroke-width="1.3"/><circle cx="5.5" cy="4.5" r="1.8" fill="#7a828f"/></svg>
<svg class="a" style="left:62.5px;top:272.3px" width="11" height="9" viewBox="0 0 11 9"><path d="M0.5 0.5h3.5l1 1.2h5.5v7h-10z" fill="#e4e4e4"/><path d="M0.5 2.2h10.5" stroke="#b8b8b8" stroke-width="0.5"/></svg>
<div class="a" style="left:82.3px;top:271.6px;font-size:7px;font-weight:bold;color:#e6e8ea;line-height:10px;white-space:nowrap">ボディ</div>
<div class="a" style="left:0;top:643.5px;width:192px;height:16.5px;background:#3a4454"></div>
<div class="a" style="left:16px;top:646.5px;font-size:7.5px;font-weight:bold;color:#e2e4e7;line-height:10px">コメント</div>
<svg class="a" style="left:177.5px;top:647.5px" width="8" height="8" viewBox="0 0 8 8"><path d="M4 0.5v7M0.5 4h7" stroke="#c8cbd0" stroke-width="1.2"/></svg>
<div class="a" style="left:434px;top:643px;width:154px;height:15.5px;background:#3a4454"></div>
<svg class="a" style="left:434px;top:643px" width="16" height="16" viewBox="0 0 16 16"><ellipse cx="7" cy="8" rx="5.5" ry="2.8" fill="none" stroke="#d8dadd" stroke-width="1"/><path d="M7 2.5v11" stroke="#4ab8ea" stroke-width="1.6"/></svg>
<svg class="a" style="left:449.1px;top:649.5px" width="5" height="4" viewBox="0 0 5 4"><path d="M0.3 0.5h4.4l-2.2 2.6z" fill="#b8bcc2"/></svg>
<svg class="a" style="left:456px;top:644px" width="14" height="14" viewBox="0 0 14 14"><path d="M1.5 4l1.5-2.5l3 1.5l3-1.5l-1 2.5z" fill="#ddd"/><rect x="1.5" y="4.5" width="11" height="8" fill="#e2e2e2"/><rect x="3" y="6.5" width="8" height="3.5" fill="#4ab8ea"/></svg>
<svg class="a" style="left:472px;top:643px" width="15" height="16" viewBox="0 0 15 16"><g fill="#ececec"><rect x="4" y="3.5" width="1.6" height="7" rx="0.8"/><rect x="6.2" y="1.8" width="1.6" height="8" rx="0.8"/><rect x="8.4" y="2.3" width="1.6" height="8" rx="0.8"/><rect x="10.6" y="4" width="1.6" height="7" rx="0.8"/><path d="M4 9h8.2v2c0 2.3-1.6 3.8-3.8 3.8h-1c-1.3 0-2.2-0.6-2.9-1.5l-2.6-3.6a0.9 0.9 0 0 1 1.4-1.1l0.7 0.9z"/></g></svg>
<svg class="a" style="left:489px;top:643px" width="14" height="15" viewBox="0 0 14 15"><circle cx="6" cy="8.5" r="3.6" fill="none" stroke="#dcdcdc" stroke-width="1.2"/><path d="M8.5 11l3 3" stroke="#e88a3a" stroke-width="1.4"/><path d="M11 2.5v4M9 4.5h4M9 7.3h4" stroke="#ddd" stroke-width="0.9"/></svg>
<svg class="a" style="left:506px;top:643px" width="15" height="16" viewBox="0 0 15 16"><rect x="1" y="1.5" width="12.5" height="12.5" fill="none" stroke="#aaa" stroke-width="0.8" stroke-dasharray="1.5 1"/><circle cx="7.2" cy="7.7" r="4.5" fill="none" stroke="#ddd" stroke-width="1.2"/><path d="M11.5 12.5l2 2" stroke="#e88a3a" stroke-width="1.2"/></svg>
<svg class="a" style="left:522.1px;top:649.5px" width="5" height="4" viewBox="0 0 5 4"><path d="M0.3 0.5h4.4l-2.2 2.6z" fill="#b8bcc2"/></svg>
<svg class="a" style="left:528px;top:644px" width="14" height="14" viewBox="0 0 14 14"><rect x="1" y="2" width="12" height="8.5" fill="#dcdcdc"/><rect x="2.3" y="3.2" width="9.4" height="6" fill="#9a9a9a"/><rect x="5" y="11" width="4" height="1.5" fill="#ccc"/></svg>
<svg class="a" style="left:541.9px;top:649.5px" width="5" height="4" viewBox="0 0 5 4"><path d="M0.3 0.5h4.4l-2.2 2.6z" fill="#b8bcc2"/></svg>
<svg class="a" style="left:548px;top:644px" width="13" height="13" viewBox="0 0 13 13"><rect x="1.2" y="1.2" width="3" height="3" fill="#e4e4e4"/><rect x="1.2" y="4.9" width="3" height="3" fill="#e4e4e4"/><rect x="1.2" y="8.6" width="3" height="3" fill="#e4e4e4"/><rect x="4.9" y="1.2" width="3" height="3" fill="#e4e4e4"/><rect x="4.9" y="4.9" width="3" height="3" fill="#e4e4e4"/><rect x="4.9" y="8.6" width="3" height="3" fill="#e4e4e4"/><rect x="8.6" y="1.2" width="3" height="3" fill="#e4e4e4"/><rect x="8.6" y="4.9" width="3" height="3" fill="#e4e4e4"/><rect x="8.6" y="8.6" width="3" height="3" fill="#e4e4e4"/><rect x="0.5" y="0.5" width="12" height="12" fill="none" stroke="#ddd" stroke-width="0.7"/></svg>
<svg class="a" style="left:561.5px;top:649.5px" width="5" height="4" viewBox="0 0 5 4"><path d="M0.3 0.5h4.4l-2.2 2.6z" fill="#b8bcc2"/></svg>
<svg class="a" style="left:569px;top:644px" width="14" height="14" viewBox="0 0 14 14"><rect x="1" y="1" width="5.5" height="5.5" fill="#ddd"/><rect x="7.5" y="1" width="5.5" height="5.5" fill="#ddd"/><rect x="1" y="7.5" width="5.5" height="5.5" fill="#ddd"/><rect x="7.5" y="7.5" width="5.5" height="5.5" fill="#ddd"/></svg>
<svg class="a" style="left:581.8px;top:649.5px" width="5" height="4" viewBox="0 0 5 4"><path d="M0.3 0.5h4.4l-2.2 2.6z" fill="#b8bcc2"/></svg>
<div class="a" style="left:0;top:662.5px;width:1024px;height:30.5px;background:#3a4454"></div>
<div class="a" style="left:722px;top:664.5px;width:298px;height:3.5px;border-radius:2px;background:#4d5868"></div>
<svg class="a" style="left:1px;top:676px" width="12" height="12" viewBox="0 0 12 12"><rect x="2" y="1" width="1.5" height="10" fill="#a9adb3"/><path d="M11 1v10l-7-5z" fill="#a9adb3"/></svg>
<svg class="a" style="left:18px;top:676px" width="12" height="12" viewBox="0 0 12 12"><path d="M8 1v10l-7-5z" fill="#a9adb3"/><rect x="9" y="4" width="1.2" height="4" fill="#a9adb3"/></svg>
<svg class="a" style="left:33px;top:675px" width="13" height="14" viewBox="0 0 13 14"><path d="M2 1v12l10-6z" fill="#a9adb3"/></svg>
<svg class="a" style="left:49px;top:676px" width="12" height="12" viewBox="0 0 12 12"><path d="M4 1v10l7-5z" fill="#a9adb3"/><rect x="1.8" y="4" width="1.2" height="4" fill="#a9adb3"/></svg>
<svg class="a" style="left:65px;top:676px" width="12" height="12" viewBox="0 0 12 12"><rect x="8.5" y="1" width="1.5" height="10" fill="#a9adb3"/><path d="M1 1v10l7-5z" fill="#a9adb3"/></svg>
<svg class="a" style="left:88.9px;top:673.8px" width="11.2" height="11.2" viewBox="0 0 14 14"><path d="M1.5 5l2-2.5h5.5v6l-2 2.5h-5.5z" fill="#4ab8ea"/><path d="M5 8l2-2.5h5.5v6l-2 2.5h-5.5z" fill="#6cc8f2"/></svg>
<svg class="a" style="left:104.42px;top:673.8px" width="11.2" height="11.2" viewBox="0 0 14 14"><path d="M7 1.5v11M1.5 7h11" stroke="#f0f0f0" stroke-width="1.3"/><path d="M7 0.5l2 2.2h-4zM7 13.5l2-2.2h-4zM0.5 7l2.2 2v-4zM13.5 7l-2.2 2v-4z" fill="#f0f0f0"/></svg>
<svg class="a" style="left:119.93px;top:673.8px" width="11.2" height="11.2" viewBox="0 0 14 14"><rect x="1.5" y="2" width="10" height="9.5" fill="none" stroke="#d8d8d8" stroke-width="0.9"/><rect x="0.8" y="1.3" width="1.5" height="1.5" fill="#4ab8ea"/><rect x="10.8" y="1.3" width="1.5" height="1.5" fill="#4ab8ea"/><rect x="0.8" y="10.8" width="1.5" height="1.5" fill="#4ab8ea"/><path d="M13 6.5l-5.5 6.5" stroke="#e85a3a" stroke-width="1.8"/><path d="M12 7.5l-4 4.8" stroke="#f2c94c" stroke-width="1.2"/></svg>
<svg class="a" style="left:135.45px;top:673.8px" width="11.2" height="11.2" viewBox="0 0 14 14"><path d="M1.5 7c0-2 2.5-3.5 5.5-3.5s5.5 1.5 5.5 3.5v3c0 1.5-2.5 2.5-5.5 2.5s-5.5-1-5.5-2.5z" fill="#4ab8ea"/><path d="M2 5.5c1-1.5 3-2.2 5-2.2s4 0.7 5 2.2" stroke="#eee" stroke-width="1" fill="none"/><rect x="10" y="7" width="3" height="4" fill="#ddd"/></svg>
<svg class="a" style="left:150.96px;top:673.8px" width="11.2" height="11.2" viewBox="0 0 14 14"><rect x="1.5" y="2" width="10" height="9.5" fill="none" stroke="#d8d8d8" stroke-width="0.9"/><rect x="0.8" y="1.3" width="1.5" height="1.5" fill="#4ab8ea"/><rect x="10.8" y="1.3" width="1.5" height="1.5" fill="#4ab8ea"/><rect x="0.8" y="10.8" width="1.5" height="1.5" fill="#4ab8ea"/><path d="M13 6.5l-5.5 6.5" stroke="#e85a3a" stroke-width="1.8"/><path d="M12 7.5l-4 4.8" stroke="#f2c94c" stroke-width="1.2"/></svg>
<svg class="a" style="left:166.48px;top:673.8px" width="11.2" height="11.2" viewBox="0 0 14 14"><rect x="1.5" y="2" width="10" height="9.5" fill="none" stroke="#d8d8d8" stroke-width="0.9"/><rect x="0.8" y="1.3" width="1.5" height="1.5" fill="#4ab8ea"/><rect x="10.8" y="1.3" width="1.5" height="1.5" fill="#4ab8ea"/><rect x="0.8" y="10.8" width="1.5" height="1.5" fill="#4ab8ea"/><path d="M13 6.5l-5.5 6.5" stroke="#e85a3a" stroke-width="1.8"/><path d="M12 7.5l-4 4.8" stroke="#f2c94c" stroke-width="1.2"/></svg>
<svg class="a" style="left:181.99px;top:673.8px" width="11.2" height="11.2" viewBox="0 0 14 14"><path d="M1.5 4l2-2.5h3v9l-2 2.5h-3z" fill="#ddd"/><path d="M4.5 4l2.5-2.5v9l-2.5 2.5z" fill="#43c98a"/><path d="M8.5 4l3.5-3v9l-3.5 3z" fill="#f4a46a"/></svg>
<svg class="a" style="left:197.51px;top:673.8px" width="11.2" height="11.2" viewBox="0 0 14 14"><rect x="1.5" y="2" width="10" height="9.5" fill="none" stroke="#d8d8d8" stroke-width="0.9"/><rect x="0.8" y="1.3" width="1.5" height="1.5" fill="#4ab8ea"/><rect x="10.8" y="1.3" width="1.5" height="1.5" fill="#4ab8ea"/><rect x="0.8" y="10.8" width="1.5" height="1.5" fill="#4ab8ea"/><path d="M13 6.5l-5.5 6.5" stroke="#e85a3a" stroke-width="1.8"/><path d="M12 7.5l-4 4.8" stroke="#f2c94c" stroke-width="1.2"/></svg>
<svg class="a" style="left:213.03px;top:673.8px" width="11.2" height="11.2" viewBox="0 0 14 14"><path d="M1 3h12l-2 7h-8z" fill="#4ab8ea"/><path d="M1 3h12v1.5h-12z" fill="#ddd"/><circle cx="7" cy="10" r="2.8" fill="#ddd"/><circle cx="7" cy="10" r="1.5" fill="#888"/></svg>
<svg class="a" style="left:228.54px;top:673.8px" width="11.2" height="11.2" viewBox="0 0 14 14"><path d="M7 1.5v11M1.5 7h11" stroke="#f0f0f0" stroke-width="1.3"/><path d="M7 0.5l2 2.2h-4zM7 13.5l2-2.2h-4zM0.5 7l2.2 2v-4zM13.5 7l-2.2 2v-4z" fill="#f0f0f0"/></svg>
<svg class="a" style="left:244.06px;top:673.8px" width="11.2" height="11.2" viewBox="0 0 14 14"><path d="M7 1.5v11M1.5 7h11" stroke="#f0f0f0" stroke-width="1.3"/><path d="M7 0.5l2 2.2h-4zM7 13.5l2-2.2h-4zM0.5 7l2.2 2v-4zM13.5 7l-2.2 2v-4z" fill="#f0f0f0"/></svg>
<svg class="a" style="left:259.57px;top:673.8px" width="11.2" height="11.2" viewBox="0 0 14 14"><path d="M7 1.5v11M1.5 7h11" stroke="#f0f0f0" stroke-width="1.3"/><path d="M7 0.5l2 2.2h-4zM7 13.5l2-2.2h-4zM0.5 7l2.2 2v-4zM13.5 7l-2.2 2v-4z" fill="#f0f0f0"/></svg>
<svg class="a" style="left:275.09px;top:673.8px" width="11.2" height="11.2" viewBox="0 0 14 14"><path d="M1.5 3.5l2-2h8v9.5l-2 2h-8z" fill="#4ab8ea"/><path d="M9.5 3.5l2-2v9.5l-2 2z" fill="#2e86b8"/><path d="M1.5 13h8v0.8h-8z" fill="#ccc"/></svg>
<svg class="a" style="left:290.61px;top:673.8px" width="11.2" height="11.2" viewBox="0 0 14 14"><path d="M2 4l2-2h7.5v8l-2 2h-7.5z" fill="#e0e0e0"/><path d="M5 7l2-2h6v7l-2 2h-6z" fill="#9aa0a8"/></svg>
<svg class="a" style="left:306.12px;top:673.8px" width="11.2" height="11.2" viewBox="0 0 14 14"><path d="M7 1.5v11M1.5 7h11" stroke="#f0f0f0" stroke-width="1.3"/><path d="M7 0.5l2 2.2h-4zM7 13.5l2-2.2h-4zM0.5 7l2.2 2v-4zM13.5 7l-2.2 2v-4z" fill="#f0f0f0"/></svg>
<svg class="a" style="left:321.64px;top:673.8px" width="11.2" height="11.2" viewBox="0 0 14 14"><path d="M2 4l2-2h7.5v8l-2 2h-7.5z" fill="#e0e0e0"/><path d="M5 7l2-2h6v7l-2 2h-6z" fill="#9aa0a8"/></svg>
<svg class="a" style="left:337.15px;top:673.8px" width="11.2" height="11.2" viewBox="0 0 14 14"><rect x="1.5" y="2" width="10" height="9.5" fill="none" stroke="#d8d8d8" stroke-width="0.9"/><rect x="0.8" y="1.3" width="1.5" height="1.5" fill="#4ab8ea"/><rect x="10.8" y="1.3" width="1.5" height="1.5" fill="#4ab8ea"/><rect x="0.8" y="10.8" width="1.5" height="1.5" fill="#4ab8ea"/><path d="M13 6.5l-5.5 6.5" stroke="#e85a3a" stroke-width="1.8"/><path d="M12 7.5l-4 4.8" stroke="#f2c94c" stroke-width="1.2"/></svg>
<svg class="a" style="left:352.67px;top:673.8px" width="11.2" height="11.2" viewBox="0 0 14 14"><path d="M1.5 3.5l2-2h8v9.5l-2 2h-8z" fill="#4ab8ea"/><path d="M9.5 3.5l2-2v9.5l-2 2z" fill="#2e86b8"/><path d="M1.5 13h8v0.8h-8z" fill="#ccc"/></svg>
<svg class="a" style="left:368.18px;top:673.8px" width="11.2" height="11.2" viewBox="0 0 14 14"><circle cx="7" cy="1.8" r="1.2" fill="#4ab8ea"/><circle cx="3" cy="4" r="1.2" fill="#4ab8ea"/><circle cx="11" cy="4" r="1.2" fill="#4ab8ea"/><circle cx="2" cy="8" r="1.2" fill="#4ab8ea"/><circle cx="12" cy="8" r="1.2" fill="#4ab8ea"/><circle cx="4" cy="11.5" r="1.2" fill="#4ab8ea"/><circle cx="10" cy="11.5" r="1.2" fill="#4ab8ea"/><circle cx="7" cy="13" r="1.2" fill="#4ab8ea"/></svg>
<svg class="a" style="left:383.7px;top:673.8px" width="11.2" height="11.2" viewBox="0 0 14 14"><path d="M7 1.5v11M1.5 7h11" stroke="#f0f0f0" stroke-width="1.3"/><path d="M7 0.5l2 2.2h-4zM7 13.5l2-2.2h-4zM0.5 7l2.2 2v-4zM13.5 7l-2.2 2v-4z" fill="#f0f0f0"/></svg>
<svg class="a" style="left:399.22px;top:673.8px" width="11.2" height="11.2" viewBox="0 0 14 14"><rect x="1.5" y="2" width="10" height="9.5" fill="none" stroke="#d8d8d8" stroke-width="0.9"/><rect x="0.8" y="1.3" width="1.5" height="1.5" fill="#4ab8ea"/><rect x="10.8" y="1.3" width="1.5" height="1.5" fill="#4ab8ea"/><rect x="0.8" y="10.8" width="1.5" height="1.5" fill="#4ab8ea"/><path d="M13 6.5l-5.5 6.5" stroke="#e85a3a" stroke-width="1.8"/><path d="M12 7.5l-4 4.8" stroke="#f2c94c" stroke-width="1.2"/></svg>
<svg class="a" style="left:414.73px;top:673.8px" width="11.2" height="11.2" viewBox="0 0 14 14"><path d="M1.5 7c0-2 2.5-3.5 5.5-3.5s5.5 1.5 5.5 3.5v3c0 1.5-2.5 2.5-5.5 2.5s-5.5-1-5.5-2.5z" fill="#4ab8ea"/><path d="M2 5.5c1-1.5 3-2.2 5-2.2s4 0.7 5 2.2" stroke="#eee" stroke-width="1" fill="none"/><rect x="10" y="7" width="3" height="4" fill="#ddd"/></svg>
<svg class="a" style="left:430.25px;top:673.8px" width="11.2" height="11.2" viewBox="0 0 14 14"><path d="M7 1.5v11M1.5 7h11" stroke="#f0f0f0" stroke-width="1.3"/><path d="M7 0.5l2 2.2h-4zM7 13.5l2-2.2h-4zM0.5 7l2.2 2v-4zM13.5 7l-2.2 2v-4z" fill="#f0f0f0"/></svg>
<svg class="a" style="left:445.76px;top:673.8px" width="11.2" height="11.2" viewBox="0 0 14 14"><circle cx="7" cy="1.8" r="1.2" fill="#4ab8ea"/><circle cx="3" cy="4" r="1.2" fill="#4ab8ea"/><circle cx="11" cy="4" r="1.2" fill="#4ab8ea"/><circle cx="2" cy="8" r="1.2" fill="#4ab8ea"/><circle cx="12" cy="8" r="1.2" fill="#4ab8ea"/><circle cx="4" cy="11.5" r="1.2" fill="#4ab8ea"/><circle cx="10" cy="11.5" r="1.2" fill="#4ab8ea"/><circle cx="7" cy="13" r="1.2" fill="#4ab8ea"/></svg>
<svg class="a" style="left:461.28px;top:673.8px" width="11.2" height="11.2" viewBox="0 0 14 14"><path d="M1.5 5l2-2.5h5.5v6l-2 2.5h-5.5z" fill="#4ab8ea"/><path d="M5 8l2-2.5h5.5v6l-2 2.5h-5.5z" fill="#6cc8f2"/></svg>
<svg class="a" style="left:476.79px;top:673.8px" width="11.2" height="11.2" viewBox="0 0 14 14"><path d="M1 7h7" stroke="#ddd" stroke-width="1.2"/><path d="M3 5l-2 2l2 2" stroke="#ddd" stroke-width="1" fill="none"/><circle cx="10" cy="7" r="2.8" fill="#4ab8ea"/></svg>
<svg class="a" style="left:492.31px;top:673.8px" width="11.2" height="11.2" viewBox="0 0 14 14"><path d="M7 1.5v11M1.5 7h11" stroke="#f0f0f0" stroke-width="1.3"/><path d="M7 0.5l2 2.2h-4zM7 13.5l2-2.2h-4zM0.5 7l2.2 2v-4zM13.5 7l-2.2 2v-4z" fill="#f0f0f0"/></svg>
<svg class="a" style="left:507.83px;top:673.8px" width="11.2" height="11.2" viewBox="0 0 14 14"><path d="M7 1.5v11M1.5 7h11" stroke="#f0f0f0" stroke-width="1.3"/><path d="M7 0.5l2 2.2h-4zM7 13.5l2-2.2h-4zM0.5 7l2.2 2v-4zM13.5 7l-2.2 2v-4z" fill="#f0f0f0"/></svg>
<svg class="a" style="left:523.34px;top:673.8px" width="11.2" height="11.2" viewBox="0 0 14 14"><rect x="2" y="5.5" width="2" height="3.5" fill="#ddd"/><rect x="6" y="5.5" width="2" height="3.5" fill="#ddd"/><rect x="10" y="5.5" width="2" height="3.5" fill="#ddd"/></svg>
<svg class="a" style="left:538.86px;top:673.8px" width="11.2" height="11.2" viewBox="0 0 14 14"><path d="M7 3v8M3 7h8" stroke="#eee" stroke-width="1"/><path d="M7 2l1.5 1.8h-3zM7 12l1.5-1.8h-3zM2 7l1.8 1.5v-3zM12 7l-1.8 1.5v-3z" fill="#eee"/></svg>
<svg class="a" style="left:554.37px;top:673.8px" width="11.2" height="11.2" viewBox="0 0 14 14"><path d="M2 4l2.5-2.5h7.5v8.5l-2.5 2.5h-7.5z" fill="#b98af0"/><path d="M2 4l2.5-2.5h7.5l-2.5 2.5z" fill="#d8bcfa"/><path d="M9.5 4l2.5-2.5v8.5l-2.5 2.5z" fill="#9b6ed8"/></svg>
<svg class="a" style="left:569.89px;top:673.8px" width="11.2" height="11.2" viewBox="0 0 14 14"><rect x="1.5" y="2" width="10" height="9.5" fill="none" stroke="#d8d8d8" stroke-width="0.9"/><rect x="0.8" y="1.3" width="1.5" height="1.5" fill="#4ab8ea"/><rect x="10.8" y="1.3" width="1.5" height="1.5" fill="#4ab8ea"/><rect x="0.8" y="10.8" width="1.5" height="1.5" fill="#4ab8ea"/><path d="M13 6.5l-5.5 6.5" stroke="#e85a3a" stroke-width="1.8"/><path d="M12 7.5l-4 4.8" stroke="#f2c94c" stroke-width="1.2"/></svg>
<svg class="a" style="left:585.41px;top:673.8px" width="11.2" height="11.2" viewBox="0 0 14 14"><path d="M1.5 3.5l2-2h8v9.5l-2 2h-8z" fill="#4ab8ea"/><path d="M9.5 3.5l2-2v9.5l-2 2z" fill="#2e86b8"/><path d="M1.5 13h8v0.8h-8z" fill="#ccc"/></svg>
<svg class="a" style="left:600.92px;top:673.8px" width="11.2" height="11.2" viewBox="0 0 14 14"><path d="M1.5 13V5c0-2 1.5-3.5 3.5-3.5h3l4.5 4.5v7z" fill="#e4e4e4"/><path d="M8 1.5c2.5 0 4.5 2 4.5 4.5" stroke="#4ab8ea" stroke-width="2" fill="none"/></svg>
<svg class="a" style="left:616.44px;top:673.8px" width="11.2" height="11.2" viewBox="0 0 14 14"><path d="M1.5 13V5c0-2 1.5-3.5 3.5-3.5h3l4.5 4.5v7z" fill="#e4e4e4"/><path d="M8 1.5c2.5 0 4.5 2 4.5 4.5" stroke="#4ab8ea" stroke-width="2" fill="none"/></svg>
<svg class="a" style="left:631.95px;top:673.8px" width="11.2" height="11.2" viewBox="0 0 14 14"><path d="M7 1.5v11M1.5 7h11" stroke="#f0f0f0" stroke-width="1.3"/><path d="M7 0.5l2 2.2h-4zM7 13.5l2-2.2h-4zM0.5 7l2.2 2v-4zM13.5 7l-2.2 2v-4z" fill="#f0f0f0"/></svg>
<svg class="a" style="left:647.47px;top:673.8px" width="11.2" height="11.2" viewBox="0 0 14 14"><path d="M7 1.5v11M1.5 7h11" stroke="#f0f0f0" stroke-width="1.3"/><path d="M7 0.5l2 2.2h-4zM7 13.5l2-2.2h-4zM0.5 7l2.2 2v-4zM13.5 7l-2.2 2v-4z" fill="#f0f0f0"/></svg>
<svg class="a" style="left:662.98px;top:673.8px" width="11.2" height="11.2" viewBox="0 0 14 14"><path d="M7 1.5v11M1.5 7h11" stroke="#f0f0f0" stroke-width="1.3"/><path d="M7 0.5l2 2.2h-4zM7 13.5l2-2.2h-4zM0.5 7l2.2 2v-4zM13.5 7l-2.2 2v-4z" fill="#f0f0f0"/></svg>
<svg class="a" style="left:678.5px;top:673.8px" width="11.2" height="11.2" viewBox="0 0 14 14"><path d="M7 1.5v11M1.5 7h11" stroke="#f0f0f0" stroke-width="1.3"/><path d="M7 0.5l2 2.2h-4zM7 13.5l2-2.2h-4zM0.5 7l2.2 2v-4zM13.5 7l-2.2 2v-4z" fill="#f0f0f0"/></svg>
<svg class="a" style="left:694.02px;top:673.8px" width="11.2" height="11.2" viewBox="0 0 14 14"><path d="M7 1.5v11M1.5 7h11" stroke="#f0f0f0" stroke-width="1.3"/><path d="M7 0.5l2 2.2h-4zM7 13.5l2-2.2h-4zM0.5 7l2.2 2v-4zM13.5 7l-2.2 2v-4z" fill="#f0f0f0"/></svg>
<svg class="a" style="left:709.53px;top:673.8px" width="11.2" height="11.2" viewBox="0 0 14 14"><path d="M7 1.5v11M1.5 7h11" stroke="#f0f0f0" stroke-width="1.3"/><path d="M7 0.5l2 2.2h-4zM7 13.5l2-2.2h-4zM0.5 7l2.2 2v-4zM13.5 7l-2.2 2v-4z" fill="#f0f0f0"/></svg>
<svg class="a" style="left:725.05px;top:673.8px" width="11.2" height="11.2" viewBox="0 0 14 14"><path d="M7 3v8M3 7h8" stroke="#eee" stroke-width="1"/><path d="M7 2l1.5 1.8h-3zM7 12l1.5-1.8h-3zM2 7l1.8 1.5v-3zM12 7l-1.8 1.5v-3z" fill="#eee"/></svg>
<svg class="a" style="left:740.56px;top:673.8px" width="11.2" height="11.2" viewBox="0 0 14 14"><rect x="1.5" y="2" width="10" height="9.5" fill="none" stroke="#d8d8d8" stroke-width="0.9"/><rect x="0.8" y="1.3" width="1.5" height="1.5" fill="#4ab8ea"/><rect x="10.8" y="1.3" width="1.5" height="1.5" fill="#4ab8ea"/><rect x="0.8" y="10.8" width="1.5" height="1.5" fill="#4ab8ea"/><path d="M13 6.5l-5.5 6.5" stroke="#e85a3a" stroke-width="1.8"/><path d="M12 7.5l-4 4.8" stroke="#f2c94c" stroke-width="1.2"/></svg>
<svg class="a" style="left:756.08px;top:673.8px" width="11.2" height="11.2" viewBox="0 0 14 14"><rect x="1.5" y="2" width="10" height="9.5" fill="none" stroke="#d8d8d8" stroke-width="0.9"/><rect x="0.8" y="1.3" width="1.5" height="1.5" fill="#4ab8ea"/><rect x="10.8" y="1.3" width="1.5" height="1.5" fill="#4ab8ea"/><rect x="0.8" y="10.8" width="1.5" height="1.5" fill="#4ab8ea"/><path d="M13 6.5l-5.5 6.5" stroke="#e85a3a" stroke-width="1.8"/><path d="M12 7.5l-4 4.8" stroke="#f2c94c" stroke-width="1.2"/></svg>
<svg class="a" style="left:771.59px;top:673.8px" width="11.2" height="11.2" viewBox="0 0 14 14"><path d="M1.5 3.5l2-2h8v9.5l-2 2h-8z" fill="#4ab8ea"/><path d="M9.5 3.5l2-2v9.5l-2 2z" fill="#2e86b8"/><path d="M1.5 13h8v0.8h-8z" fill="#ccc"/></svg>
<svg class="a" style="left:787.11px;top:673.8px" width="11.2" height="11.2" viewBox="0 0 14 14"><rect x="1.5" y="1.5" width="4.5" height="4.5" rx="1" fill="#ddd"/><rect x="7" y="7.5" width="4.5" height="4.5" rx="1" fill="#ddd"/><path d="M4 6v3h3" stroke="#ddd" stroke-width="0.8" fill="none"/></svg>
<svg class="a" style="left:802.63px;top:673.8px" width="11.2" height="11.2" viewBox="0 0 14 14"><path d="M7 1.5v11M1.5 7h11" stroke="#f0f0f0" stroke-width="1.3"/><path d="M7 0.5l2 2.2h-4zM7 13.5l2-2.2h-4zM0.5 7l2.2 2v-4zM13.5 7l-2.2 2v-4z" fill="#f0f0f0"/></svg>
<svg class="a" style="left:818.14px;top:673.8px" width="11.2" height="11.2" viewBox="0 0 14 14"><path d="M6.5 1.5v11h-5.5z" fill="#ececec"/><path d="M7.5 1.5l5.5 11h-5.5z" fill="#4ab8ea"/></svg>
<svg class="a" style="left:833.66px;top:673.8px" width="11.2" height="11.2" viewBox="0 0 14 14"><rect x="1.5" y="2" width="10" height="9.5" fill="none" stroke="#d8d8d8" stroke-width="0.9"/><rect x="0.8" y="1.3" width="1.5" height="1.5" fill="#4ab8ea"/><rect x="10.8" y="1.3" width="1.5" height="1.5" fill="#4ab8ea"/><rect x="0.8" y="10.8" width="1.5" height="1.5" fill="#4ab8ea"/><path d="M13 6.5l-5.5 6.5" stroke="#e85a3a" stroke-width="1.8"/><path d="M12 7.5l-4 4.8" stroke="#f2c94c" stroke-width="1.2"/></svg>
<svg class="a" style="left:849.17px;top:673.8px" width="11.2" height="11.2" viewBox="0 0 14 14"><path d="M1.5 3.5l2-2h8v9.5l-2 2h-8z" fill="#4ab8ea"/><path d="M9.5 3.5l2-2v9.5l-2 2z" fill="#2e86b8"/><path d="M1.5 13h8v0.8h-8z" fill="#ccc"/></svg>
<svg class="a" style="left:864.69px;top:673.8px" width="11.2" height="11.2" viewBox="0 0 14 14"><path d="M7 1.5v11M1.5 7h11" stroke="#f0f0f0" stroke-width="1.3"/><path d="M7 0.5l2 2.2h-4zM7 13.5l2-2.2h-4zM0.5 7l2.2 2v-4zM13.5 7l-2.2 2v-4z" fill="#f0f0f0"/></svg>
<svg class="a" style="left:880.21px;top:673.8px" width="11.2" height="11.2" viewBox="0 0 14 14"><path d="M7 1.5v11M1.5 7h11" stroke="#f0f0f0" stroke-width="1.3"/><path d="M7 0.5l2 2.2h-4zM7 13.5l2-2.2h-4zM0.5 7l2.2 2v-4zM13.5 7l-2.2 2v-4z" fill="#f0f0f0"/></svg>
<svg class="a" style="left:895.72px;top:673.8px" width="11.2" height="11.2" viewBox="0 0 14 14"><path d="M6.5 1.5v11h-5.5z" fill="#ececec"/><path d="M7.5 1.5l5.5 11h-5.5z" fill="#4ab8ea"/></svg>
<svg class="a" style="left:911.24px;top:673.8px" width="11.2" height="11.2" viewBox="0 0 14 14"><path d="M3 3l4 4.5l4-4.5M7 7.5v4" stroke="#ddd" stroke-width="1.2" fill="none"/><circle cx="3" cy="2.8" r="1.8" fill="#4ab8ea"/><circle cx="11" cy="2.8" r="1.8" fill="#4ab8ea"/><circle cx="7" cy="11.5" r="1.8" fill="#4ab8ea"/></svg>
<svg class="a" style="left:926.75px;top:673.8px" width="11.2" height="11.2" viewBox="0 0 14 14"><path d="M2 4l2.5-2.5h7.5v8.5l-2.5 2.5h-7.5z" fill="#b98af0"/><path d="M2 4l2.5-2.5h7.5l-2.5 2.5z" fill="#d8bcfa"/><path d="M9.5 4l2.5-2.5v8.5l-2.5 2.5z" fill="#9b6ed8"/></svg>
<svg class="a" style="left:942.27px;top:673.8px" width="11.2" height="11.2" viewBox="0 0 14 14"><path d="M1.5 5l2-2.5h5.5v6l-2 2.5h-5.5z" fill="#4ab8ea"/><path d="M5 8l2-2.5h5.5v6l-2 2.5h-5.5z" fill="#6cc8f2"/></svg>
<svg class="a" style="left:957.78px;top:673.8px" width="11.2" height="11.2" viewBox="0 0 14 14"><path d="M6.5 1.5v11h-5.5z" fill="#ececec"/><path d="M7.5 1.5l5.5 11h-5.5z" fill="#4ab8ea"/></svg>
<svg class="a" style="left:973.3px;top:673.8px" width="11.2" height="11.2" viewBox="0 0 14 14"><path d="M2 4l2.5-2.5h7.5v8.5l-2.5 2.5h-7.5z" fill="#b98af0"/><path d="M2 4l2.5-2.5h7.5l-2.5 2.5z" fill="#d8bcfa"/><path d="M9.5 4l2.5-2.5v8.5l-2.5 2.5z" fill="#9b6ed8"/></svg>
<svg class="a" style="left:0;top:0" width="1024" height="693" viewBox="0 0 1024 693"><path d="M94.50 686v3" stroke="#8891a0" stroke-width="0.8"/><path d="M110.02 686v3" stroke="#8891a0" stroke-width="0.8"/><path d="M125.53 686v3" stroke="#8891a0" stroke-width="0.8"/><path d="M141.05 686v3" stroke="#8891a0" stroke-width="0.8"/><path d="M156.56 686v3" stroke="#8891a0" stroke-width="0.8"/><path d="M172.08 686v3" stroke="#8891a0" stroke-width="0.8"/><path d="M187.59 686v3" stroke="#8891a0" stroke-width="0.8"/><path d="M203.11 686v3" stroke="#8891a0" stroke-width="0.8"/><path d="M218.63 686v3" stroke="#8891a0" stroke-width="0.8"/><path d="M234.14 686v3" stroke="#8891a0" stroke-width="0.8"/><path d="M249.66 686v3" stroke="#8891a0" stroke-width="0.8"/><path d="M265.17 686v3" stroke="#8891a0" stroke-width="0.8"/><path d="M280.69 686v3" stroke="#8891a0" stroke-width="0.8"/><path d="M296.21 686v3" stroke="#8891a0" stroke-width="0.8"/><path d="M311.72 686v3" stroke="#8891a0" stroke-width="0.8"/><path d="M327.24 686v3" stroke="#8891a0" stroke-width="0.8"/><path d="M342.75 686v3" stroke="#8891a0" stroke-width="0.8"/><path d="M358.27 686v3" stroke="#8891a0" stroke-width="0.8"/><path d="M373.78 686v3" stroke="#8891a0" stroke-width="0.8"/><path d="M389.30 686v3" stroke="#8891a0" stroke-width="0.8"/><path d="M404.82 686v3" stroke="#8891a0" stroke-width="0.8"/><path d="M420.33 686v3" stroke="#8891a0" stroke-width="0.8"/><path d="M435.85 686v3" stroke="#8891a0" stroke-width="0.8"/><path d="M451.36 686v3" stroke="#8891a0" stroke-width="0.8"/><path d="M466.88 686v3" stroke="#8891a0" stroke-width="0.8"/><path d="M482.39 686v3" stroke="#8891a0" stroke-width="0.8"/><path d="M497.91 686v3" stroke="#8891a0" stroke-width="0.8"/><path d="M513.43 686v3" stroke="#8891a0" stroke-width="0.8"/><path d="M528.94 686v3" stroke="#8891a0" stroke-width="0.8"/><path d="M544.46 686v3" stroke="#8891a0" stroke-width="0.8"/><path d="M559.97 686v3" stroke="#8891a0" stroke-width="0.8"/><path d="M575.49 686v3" stroke="#8891a0" stroke-width="0.8"/><path d="M591.01 686v3" stroke="#8891a0" stroke-width="0.8"/><path d="M606.52 686v3" stroke="#8891a0" stroke-width="0.8"/><path d="M622.04 686v3" stroke="#8891a0" stroke-width="0.8"/><path d="M637.55 686v3" stroke="#8891a0" stroke-width="0.8"/><path d="M653.07 686v3" stroke="#8891a0" stroke-width="0.8"/><path d="M668.58 686v3" stroke="#8891a0" stroke-width="0.8"/><path d="M684.10 686v3" stroke="#8891a0" stroke-width="0.8"/><path d="M699.62 686v3" stroke="#8891a0" stroke-width="0.8"/><path d="M715.13 686v3" stroke="#8891a0" stroke-width="0.8"/><path d="M730.65 686v3" stroke="#8891a0" stroke-width="0.8"/><path d="M746.16 686v3" stroke="#8891a0" stroke-width="0.8"/><path d="M761.68 686v3" stroke="#8891a0" stroke-width="0.8"/><path d="M777.19 686v3" stroke="#8891a0" stroke-width="0.8"/><path d="M792.71 686v3" stroke="#8891a0" stroke-width="0.8"/><path d="M808.23 686v3" stroke="#8891a0" stroke-width="0.8"/><path d="M823.74 686v3" stroke="#8891a0" stroke-width="0.8"/><path d="M839.26 686v3" stroke="#8891a0" stroke-width="0.8"/><path d="M854.77 686v3" stroke="#8891a0" stroke-width="0.8"/><path d="M870.29 686v3" stroke="#8891a0" stroke-width="0.8"/><path d="M885.81 686v3" stroke="#8891a0" stroke-width="0.8"/><path d="M901.32 686v3" stroke="#8891a0" stroke-width="0.8"/><path d="M916.84 686v3" stroke="#8891a0" stroke-width="0.8"/><path d="M932.35 686v3" stroke="#8891a0" stroke-width="0.8"/><path d="M947.87 686v3" stroke="#8891a0" stroke-width="0.8"/><path d="M963.38 686v3" stroke="#8891a0" stroke-width="0.8"/><path d="M978.90 686v3" stroke="#8891a0" stroke-width="0.8"/><path d="M90 689.8H980.5" stroke="#6f7888" stroke-width="0.9"/><path d="M84 689.8h1.5M87 689.8h1.5" stroke="#7f8898" stroke-width="0.8"/></svg>
<svg class="a" style="left:522px;top:684px" width="10" height="9" viewBox="0 0 10 9"><rect x="1" y="1" width="8" height="8" fill="#9aa0a8"/><path d="M5 1v8M1 5h8" stroke="#3a4454" stroke-width="0.8"/></svg>
<svg class="a" style="left:912px;top:685px" width="10" height="8" viewBox="0 0 10 8"><rect x="1.2" y="1" width="6.5" height="6" rx="1" fill="#a9adb3"/><path d="M2.5 4h4" stroke="#6b7380" stroke-width="0.8"/></svg>
<svg class="a" style="left:981px;top:669px" width="12" height="24" viewBox="0 0 12 24"><path d="M2 1h8.5v2l-3 3v15.5h-2.5v-15.5l-3-3z" fill="#dedede"/></svg>
<svg class="a" style="left:0;top:0" width="1024" height="693" viewBox="0 0 1024 693"><path d="M916 690.2H949V686.5" stroke="#a9adb3" stroke-width="0.9" fill="none"/></svg>
<svg class="a" style="left:1006px;top:675px" width="14" height="14" viewBox="0 0 14 14"><circle cx="7" cy="7" r="3.4" fill="none" stroke="#a9adb3" stroke-width="2.4"/><rect x="6" y="0.8" width="2" height="2.6" fill="#a9adb3" transform="rotate(0 7 7)"/><rect x="6" y="0.8" width="2" height="2.6" fill="#a9adb3" transform="rotate(45 7 7)"/><rect x="6" y="0.8" width="2" height="2.6" fill="#a9adb3" transform="rotate(90 7 7)"/><rect x="6" y="0.8" width="2" height="2.6" fill="#a9adb3" transform="rotate(135 7 7)"/><rect x="6" y="0.8" width="2" height="2.6" fill="#a9adb3" transform="rotate(180 7 7)"/><rect x="6" y="0.8" width="2" height="2.6" fill="#a9adb3" transform="rotate(225 7 7)"/><rect x="6" y="0.8" width="2" height="2.6" fill="#a9adb3" transform="rotate(270 7 7)"/><rect x="6" y="0.8" width="2" height="2.6" fill="#a9adb3" transform="rotate(315 7 7)"/></svg>
</div></body></html>
